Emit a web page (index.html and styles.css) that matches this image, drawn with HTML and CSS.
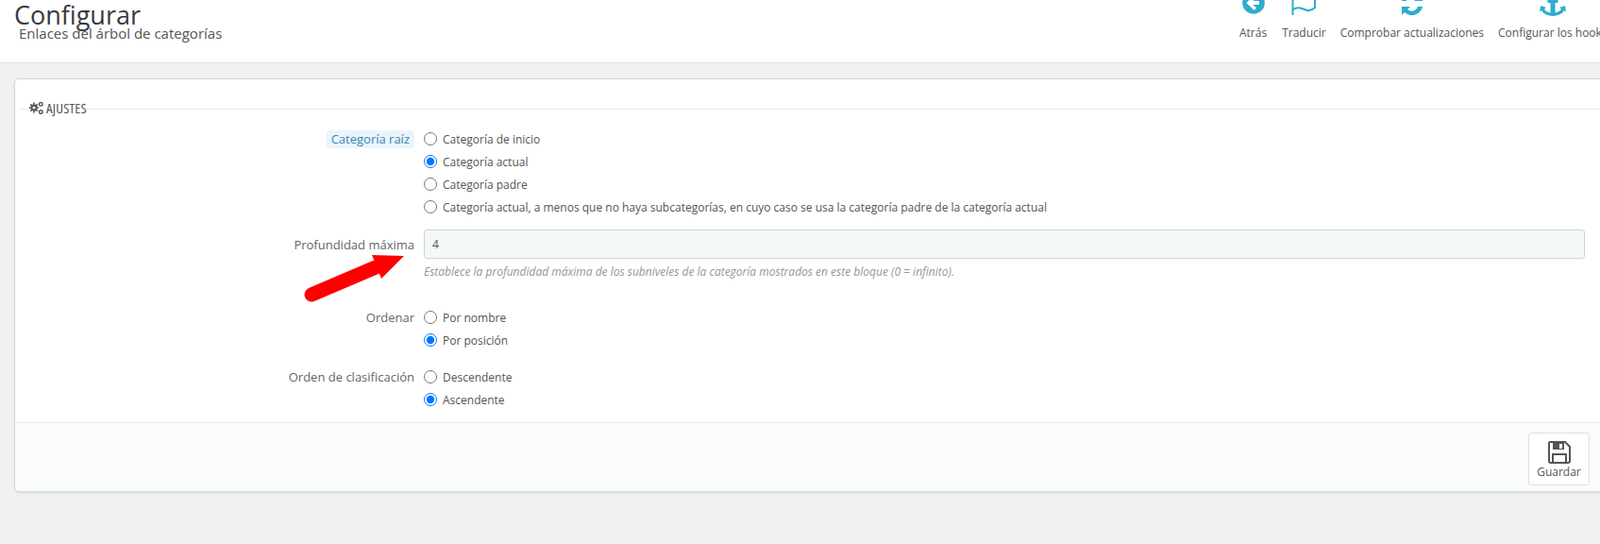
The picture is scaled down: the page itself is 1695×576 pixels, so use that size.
FILE: index.html
```html
<!DOCTYPE html>
<html lang="es">
<head>
<meta charset="utf-8">
<title>Configurar</title>
<link rel="stylesheet" href="styles.css">
</head>
<body>
<header class="page-head">
  <div class="titles">
    <h1 class="title">Configurar</h1>
    <h2 class="subtitle">Enlaces del árbol de categorías</h2>
  </div>
  <nav class="toolbar">
    <a class="tool tool-back"><svg class="tool-icon" viewBox="0 0 28 28"><circle cx="14" cy="14" r="11.800" fill="#2eacce"/><path d="M14.500 6l-8 8 8 8 2.500-2.500-3.500-3.500H20v-4h-6.500L17 8.500z" fill="#fff"/></svg><span>Atrás</span></a>
    <a class="tool tool-flag"><svg class="tool-icon" viewBox="0 0 28 28"><path d="M2.500 0v27M3 21c4-3 8-2 12 0s8 1 11-2V0" fill="none" stroke="#2eacce" stroke-width="2"/></svg><span>Traducir</span></a>
    <a class="tool tool-refresh"><svg class="tool-icon" viewBox="0 0 28 28"><path d="M3 18v9l3-3c5 5 14 4 18-3l1-3h-5c-2 5-7 6-11 3l3-3z" fill="#2eacce"/><path d="M25 12V3l-3 3C17 1 8 2 4 9l-1 3h5c2-5 7-6 11-3l-3 3z" fill="#2eacce"/></svg><span>Comprobar actualizaciones</span></a>
    <a class="tool tool-anchor"><svg class="tool-icon" viewBox="0 0 30 28"><path d="M12.500 0h5v11h3v3h-3v10.500c3-.5 5.500-2 6.500-4l-2-1.500 6-2 1 6.500-2-1.500C26 25 21 27.500 15 28 9 27.500 4 25 3 22l-2 1.500 1-6.500 6 2-2 1.500c1 2 3.500 3.500 6.500 4V14h-3v-3h3z" fill="#2eacce"/></svg><span>Configurar los hooks</span></a>
  </nav>
</header>
<main class="content">
  <form class="panel">
    <div class="panel-body">
      <div class="legend">
        <span class="legend-text"><svg class="cogs" viewBox="0 0 15 13"><path d="M5 .5v11M0 6h10M1.300 2.300l7.400 7.400M8.700 2.300l-7.400 7.400" stroke="#555" stroke-width="1.700"/><circle cx="5" cy="6" r="3.500" fill="#555"/><circle cx="5" cy="6" r="1.500" fill="#fff"/><circle cx="12.300" cy="2.300" r="1.800" fill="none" stroke="#555" stroke-width="1.400"/><circle cx="12.300" cy="10.500" r="1.800" fill="none" stroke="#555" stroke-width="1.400"/></svg>AJUSTES</span>
      </div>
      <div class="row row-root">
        <div class="label"><span class="hint">Categoría raíz</span></div>
        <div class="field">
          <label class="radio"><input type="radio" name="root">Categoría de inicio</label>
          <label class="radio"><input type="radio" name="root" checked>Categoría actual</label>
          <label class="radio"><input type="radio" name="root">Categoría padre</label>
          <label class="radio"><input type="radio" name="root">Categoría actual, a menos que no haya subcategorías, en cuyo caso se usa la categoría padre de la categoría actual</label>
        </div>
      </div>
      <div class="row row-depth">
        <div class="label label-input">Profundidad máxima</div>
        <div class="field">
          <input class="text-input" type="text" value="4">
          <p class="help">Establece la profundidad máxima de los subniveles de la categoría mostrados en este bloque (0 = infinito).</p>
        </div>
        <svg class="arrow" viewBox="0 0 115 60"><path d="M10 50 78 21" stroke="#f00" stroke-width="15" stroke-linecap="round"/><path d="M74 8l34 1-24 24z" fill="#f00"/></svg>
      </div>
      <div class="row row-sort">
        <div class="label">Ordenar</div>
        <div class="field">
          <label class="radio"><input type="radio" name="sort">Por nombre</label>
          <label class="radio"><input type="radio" name="sort" checked>Por posición</label>
        </div>
      </div>
      <div class="row row-order">
        <div class="label">Orden de clasificación</div>
        <div class="field">
          <label class="radio"><input type="radio" name="order">Descendente</label>
          <label class="radio"><input type="radio" name="order" checked>Ascendente</label>
        </div>
      </div>
    </div>
    <footer class="panel-foot">
      <button class="save" type="button"><svg class="save-icon" viewBox="0 0 24 24"><path d="M2 1h16l5 5v15a2 2 0 0 1-2 2H3a2 2 0 0 1-2-2V2a1 1 0 0 1 1-1z" fill="none" stroke="#555" stroke-width="2"/><path d="M5 2h12v7H5z" fill="#555"/><path d="M12 3h3v5h-3z" fill="#fff"/><path d="M5 22v-8h14v8" fill="none" stroke="#555" stroke-width="2"/></svg><span>Guardar</span></button>
    </footer>
  </form>
</main>
</body>
</html>
```
FILE: styles.css
```css
* { box-sizing: border-box; }
html, body { margin: 0; height: 100%; overflow: hidden; }
body { background: #eff1f2; font-family: "Open Sans", sans-serif; color: #555; font-size: 12px; }

.page-head { display: flex; justify-content: space-between; height: 67px; background: #fff; border-bottom: 1px solid #dfe1e2; overflow: hidden; width: 1695px; }
.titles { padding-left: 15px; }
.title { margin: -1px 0 0; font-size: 27px; line-height: 34px; font-weight: 400; color: #363a41; }
.subtitle { margin: -8px 0 0 5px; font-size: 15px; line-height: 20px; font-weight: 400; color: #555; }

.toolbar { display: flex; width: 416px; flex: none; margin-right: -1px; height: 42px; align-items: flex-end; gap: 15px; white-space: nowrap; }
.tool { display: flex; flex-direction: column; align-items: center; color: #555; font-size: 12px; line-height: 14px; flex: none; }
.tool-icon { width: 28px; height: 28px; display: block; margin-bottom: 11px; flex: none; }
.tool-back { margin-left: 33px; }
.tool-flag { margin-left: 1px; }
.tool-anchor { width: 147px; align-items: flex-start; }
.tool-anchor .tool-icon { margin-left: 43px; width: 30px; }

.content { padding: 16px 0 0 15px; width: 1720px; }
.panel { width: 1700px; background: #fff; border: 1px solid #d3d8db; border-radius: 5px; box-shadow: 0 1px 2px rgba(0,0,0,.1); }
.panel-body { padding: 22px 5px 12px; }
.legend { position: relative; height: 16px; }
.legend::before { content: ""; display: block; height: 1px; background: #e9ebec; position: absolute; left: 0; right: 0; top: 9px; }
.legend-text { position: relative; display: inline-flex; align-items: center; margin-left: 10px; font-size: 15px; line-height: 16px; letter-spacing: .15px; font-stretch: condensed; color: #555; background: #fff; }
.cogs { width: 15px; height: 13px; margin-right: 3px; }

.row { display: flex; position: relative; }
.label { width: 428px; flex: none; padding-right: 10px; text-align: right; font-size: 13px; line-height: 18px; color: #666; }
.field { flex: 1; min-width: 0; }
.row-root { margin-top: 13px; }
.row-root .label { padding-top: 3px; }
.row-depth { margin-top: 12px; }
.row-depth .label { padding-top: 7px; }
.row-sort { margin-top: 29px; }
.row-order { margin-top: 15px; }
.row-sort .label, .row-order .label { padding-top: 3px; }
.hint { display: inline-block; background: #e9f5fb; color: #3f86b3; padding: 0 5px; border-radius: 3px; line-height: 19px; }

.radio { display: flex; align-items: center; height: 24px; font-size: 12px; color: #555; }
.radio input { width: 14px; height: 14px; margin: 0 6px 0 0; accent-color: #0075ff; flex: none; }

.text-input { display: block; width: 1230px; height: 31px; padding: 0 8px; background: #f5f8f9; border: 1px solid #c7d6db; border-radius: 3px; font: 12px "Open Sans", sans-serif; color: #555; }
.help { margin: 6px 0 0; font-size: 12px; line-height: 15px; font-style: italic; color: #959595; }
.arrow { position: absolute; left: 299px; top: 19px; width: 115px; height: 60px; }

.panel-foot { height: 73px; background: #fbfcfe; border-top: 1px solid #e6e8ea; padding: 10px 0 0 1603px; border-radius: 0 0 5px 5px; }
.save { display: flex; flex-direction: column; align-items: center; width: 65px; height: 56px; background: #fff; border: 1px solid #dcdfe1; border-radius: 3px; padding: 8px 0 0; font: 12px/14px "Open Sans", sans-serif; color: #555; }
.save-icon { width: 24px; height: 24px; margin-bottom: 2px; display: block; }
```
